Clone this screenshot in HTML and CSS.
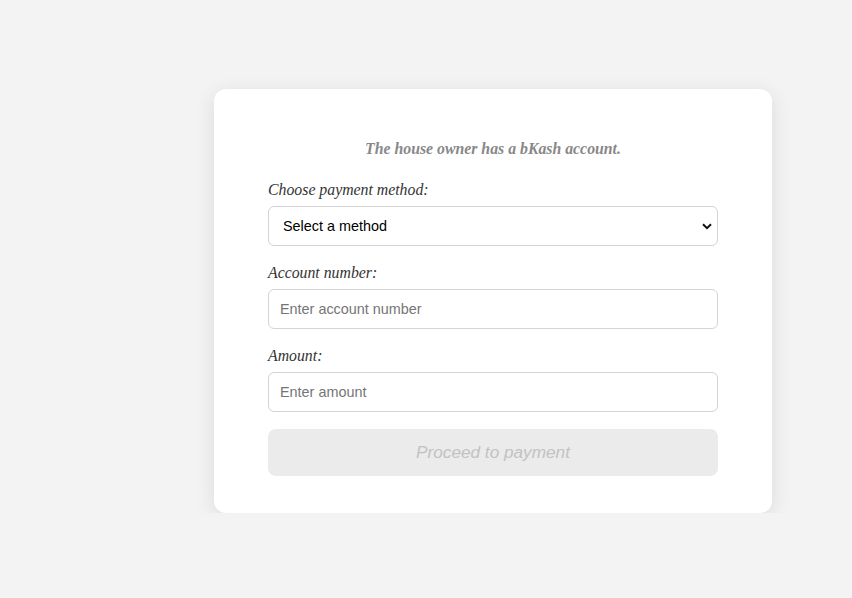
FILE: index.html
```html
<!DOCTYPE html>
<html lang="en">
<head>
<meta charset="utf-8">
<title>Payment</title>
<link rel="stylesheet" href="styles.css">
</head>
<body>
<main class="page">
  <form class="card">
    <p class="note">The house owner has a bKash account.</p>
    <label class="label" for="method">Choose payment method:</label>
    <div class="select-wrap">
      <select id="method" class="field select">
        <option>Select a method</option>
      </select>
      <svg class="chevron" width="10" height="7" viewBox="0 0 10 7" aria-hidden="true"><path d="M1 1.2 L5 5.2 L9 1.2" fill="none" stroke="#111" stroke-width="2"/></svg>
    </div>
    <label class="label" for="acc">Account number:</label>
    <input id="acc" class="field" type="text" placeholder="Enter account number">
    <label class="label" for="amt">Amount:</label>
    <input id="amt" class="field" type="text" placeholder="Enter amount">
    <button class="btn" type="button" disabled>Proceed to payment</button>
  </form>
</main>
</body>
</html>
```
FILE: styles.css
```css
html, body {
  margin: 0;
  padding: 0;
  background: #f3f3f3;
}
.page {
  padding: 89px 0 0 214px;
}
.card {
  width: 450px;
  padding: 50px 54px 37px;
  background: #fff;
  border-radius: 12px;
  box-shadow: 0 4px 20px rgba(0, 0, 0, 0.1);
  display: flex;
  flex-direction: column;
}
.note {
  margin: 0 0 21px;
  text-align: center;
  font: italic bold 15.8px/20px "Liberation Serif", serif;
  color: #888;
}
.label {
  display: block;
  font: italic 15.8px/19px "Liberation Serif", serif;
  color: #333;
  margin-bottom: 7px;
}
.field {
  box-sizing: border-box;
  width: 450px;
  height: 40px;
  margin: 0 0 17px;
  padding: 0 11px;
  border: 1px solid #d4d4d4;
  border-radius: 6px;
  background: #fff;
  font: 14.4px "Liberation Sans", Arial, sans-serif;
  color: #000;
  outline: none;
}
.field::placeholder {
  color: #757575;
}
.select-wrap {
  position: relative;
}
.select {
  appearance: none;
  -webkit-appearance: none;
  padding-left: 14px;
}
.chevron {
  position: absolute;
  right: 6px;
  top: 17px;
}
.btn {
  height: 47px;
  border: none;
  border-radius: 8px;
  background: #ebebeb;
  color: #c2c2c2;
  font: italic 17.2px "Liberation Sans", Arial, sans-serif;
  cursor: default;
}
```
